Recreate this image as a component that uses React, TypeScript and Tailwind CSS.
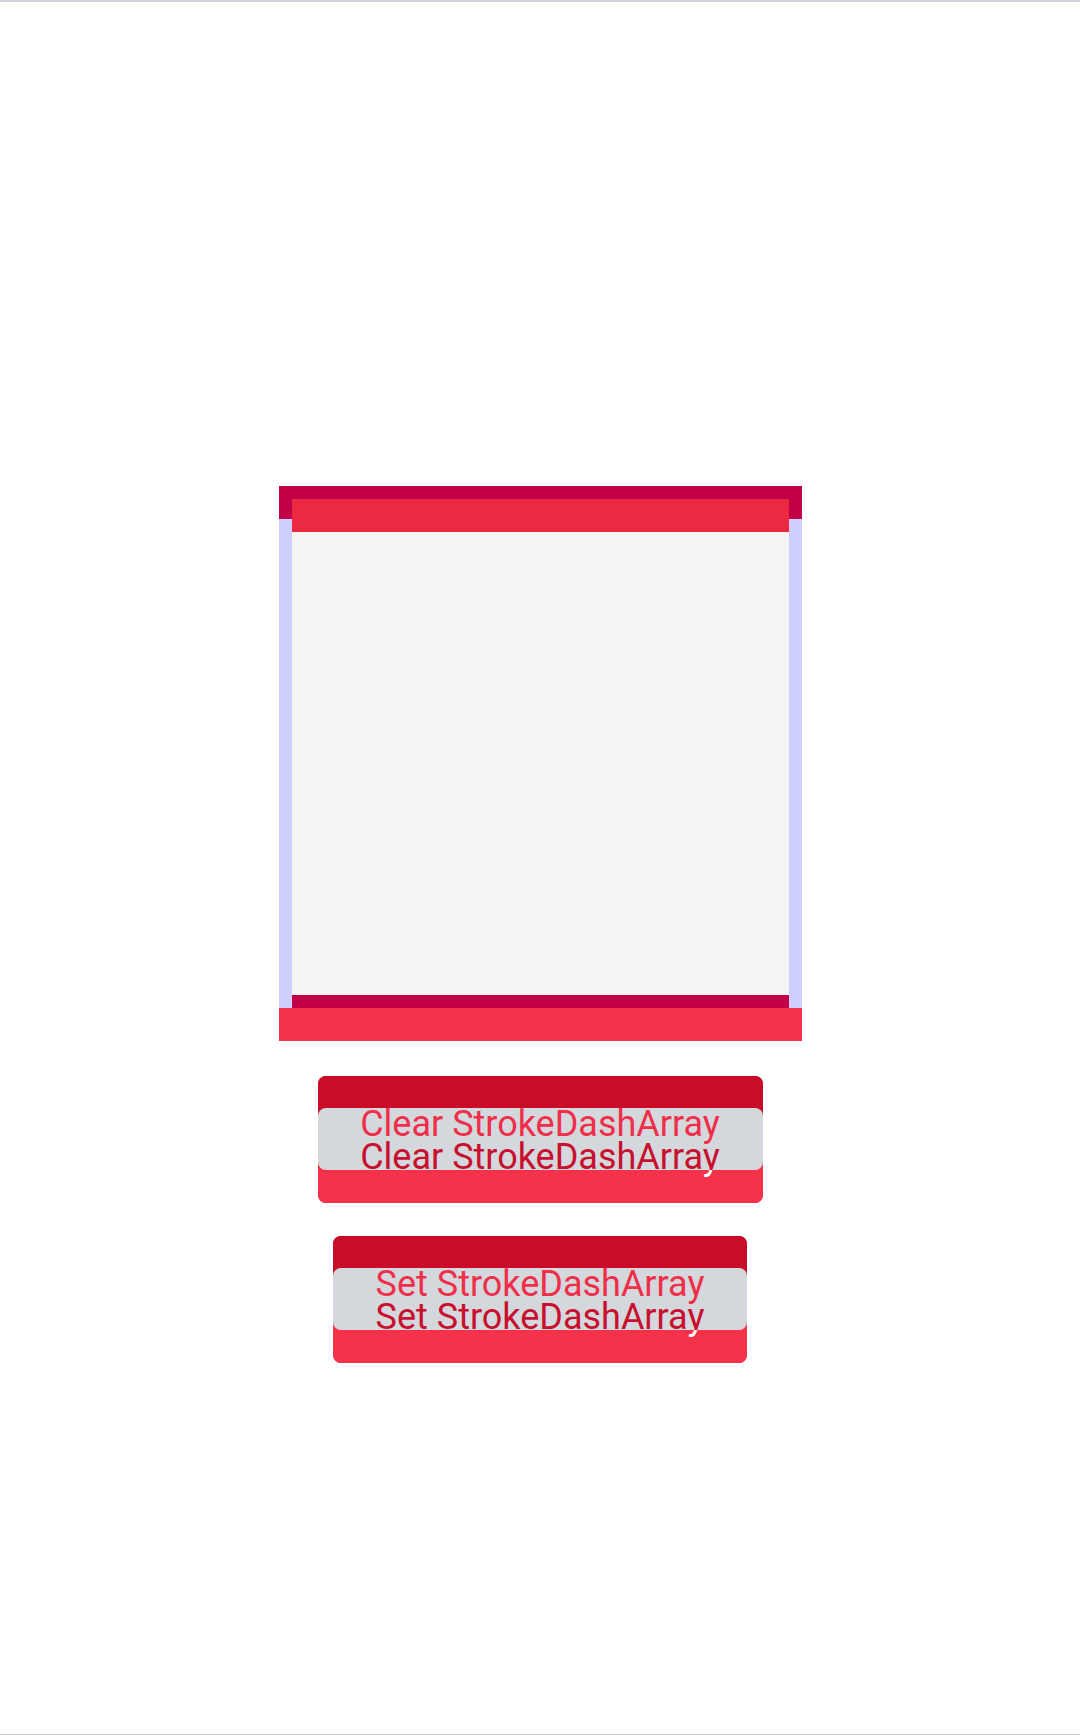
import React from "react";

type ActionButtonProps = {
  label: string;
  width: string;
};

function ActionButton({ label, width }: ActionButtonProps) {
  return (
    <div
      className={`${width} mx-auto flex h-[127px] flex-col overflow-hidden rounded-[8px] bg-[linear-gradient(#c90d28_50%,#f4334b_50%)]`}
    >
      <div className="h-[32px] shrink-0 bg-[#c90d28]" />
      <div className="h-[62px] shrink-0 overflow-hidden whitespace-nowrap rounded-[8px] bg-[#d4d7dc] text-center text-[36px] leading-[33px]">
        <div className="text-[#ef2f4a]">{label}</div>
        <div className="text-[#c8102e]">{label}</div>
      </div>
      <div className="h-[33px] shrink-0 overflow-hidden whitespace-nowrap bg-[#f4334b] text-center text-[36px] leading-[33px]">
        <div className="mt-[-29px] text-white">{label}</div>
      </div>
    </div>
  );
}

function FramePanel() {
  return (
    <div className="mx-auto flex w-[523px] flex-col">
      <div className="h-[13px] bg-[#c10047]" />
      <div className="flex h-[509px]">
        <div className="flex w-[13px] flex-col">
          <div className="h-[20px] bg-[#c10047]" />
          <div className="flex-1 bg-[#cfcfff]" />
        </div>
        <div className="flex flex-1 flex-col">
          <div className="h-[33px] bg-[#eb2a42]" />
          <div className="flex-1 bg-[#f5f5f5]" />
          <div className="h-[13px] bg-[#c10047]" />
        </div>
        <div className="flex w-[13px] flex-col">
          <div className="h-[20px] bg-[#c10047]" />
          <div className="flex-1 bg-[#cfcfff]" />
        </div>
      </div>
      <div className="h-[33px] bg-[#f5334b]" />
    </div>
  );
}

export default function App() {
  return (
    <div
      className="flex h-[1735px] w-full flex-col border-t-2 border-b border-t-[#cfd4da] border-b-[#c8c8c8] bg-white pt-[484px]"
      style={{ fontFamily: "Roboto, 'Noto Sans', sans-serif" }}
    >
      <FramePanel />
      <div className="mt-[35px]">
        <ActionButton label="Clear StrokeDashArray" width="w-[445px]" />
      </div>
      <div className="mt-[33px]">
        <ActionButton label="Set StrokeDashArray" width="w-[414px]" />
      </div>
    </div>
  );
}
